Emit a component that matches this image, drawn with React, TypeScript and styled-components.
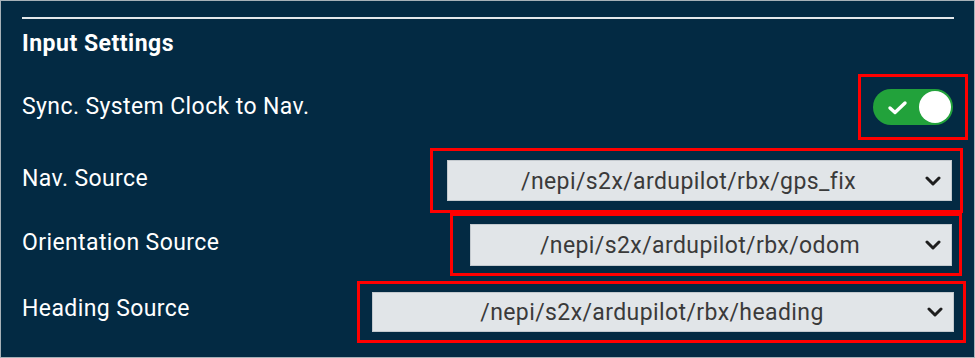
import React from "react";
import styled, { createGlobalStyle } from "styled-components";

const Global = createGlobalStyle`
  html, body { margin: 0; padding: 0; background: #ffffff; }
  body { font-family: Roboto, "Liberation Sans", Arial, sans-serif; }
  * { box-sizing: border-box; }
`;

const Frame = styled.div`
  width: 975px;
  height: 358px;
  background: #032a43;
  border: 1px solid #a7b1b8;
  padding: 16px 0 0 21px;
  display: flex;
  flex-direction: column;
  overflow: hidden;
`;

const Divider = styled.div`
  height: 2px;
  width: 932px;
  background: #e3e8eb;
`;

const Title = styled.div`
  margin-top: 11px;
  color: #ffffff;
  font-size: 23px;
  font-weight: 700;
  line-height: 28px;
  letter-spacing: 0.5px;
`;

const Rows = styled.div`
  margin-top: 16px;
  display: flex;
  flex-direction: column;
`;

const Row = styled.div<{ $h: number; $gap: number }>`
  height: ${(p) => p.$h}px;
  margin-top: ${(p) => p.$gap}px;
  display: flex;
  align-items: center;
  justify-content: space-between;
`;

const Label = styled.div<{ $dy?: number }>`
  color: #ffffff;
  font-size: 23px;
  line-height: 28px;
  letter-spacing: 0.4px;
  transform: translateY(${(p) => p.$dy ?? 0}px);
`;

const Highlight = styled.div<{ $w: number; $mr: number; $pl: number }>`
  width: ${(p) => p.$w}px;
  height: 100%;
  margin-right: ${(p) => p.$mr}px;
  border: 3px solid #ff0000;
  padding-left: ${(p) => p.$pl}px;
  display: flex;
  align-items: center;
`;

const SelectBox = styled.div<{ $w: number; $h: number }>`
  width: ${(p) => p.$w}px;
  height: ${(p) => p.$h}px;
  background: #e1e5e8;
  border: 1px solid #c3c9ce;
  display: flex;
  align-items: center;
`;

const SelectValue = styled.div`
  flex: 1;
  text-align: center;
  color: #3a3a3a;
  font-size: 23px;
  line-height: 28px;
  letter-spacing: 0.4px;
  padding-left: 4px;
  transform: translateY(1px);
`;

const Chevron = styled.svg`
  width: 16px;
  height: 12px;
  margin-right: 10px;
  flex: none;
`;

const Toggle = styled.div`
  width: 80px;
  height: 36px;
  border-radius: 18px;
  background: #22a23b;
  display: flex;
  align-items: center;
  justify-content: space-between;
  padding: 0 2px 0 14px;
`;

const Knob = styled.div`
  width: 32px;
  height: 32px;
  border-radius: 50%;
  background: #ffffff;
`;

const Check = styled.svg`
  width: 21px;
  height: 15px;
`;

const Select: React.FC<{ w: number; h: number; value: string }> = ({ w, h, value }) => (
  <SelectBox $w={w} $h={h}>
    <SelectValue>{value}</SelectValue>
    <Chevron viewBox="0 0 16 12">
      <polyline points="2,3 8,9 14,3" fill="none" stroke="#1e1e1e" strokeWidth="3" strokeLinecap="round" strokeLinejoin="round" />
    </Chevron>
  </SelectBox>
);

export default function App() {
  return (
    <>
      <Global />
      <Frame>
        <Divider />
        <Title>Input Settings</Title>
        <Rows>
          <Row $h={66} $gap={0}>
            <Label>Sync. System Clock to Nav.</Label>
            <Highlight $w={110} $mr={6} $pl={12}>
              <Toggle>
                <Check viewBox="0 0 21 15">
                  <polyline points="3,8 8,12.5 18,3" fill="none" stroke="#ffffff" strokeWidth="3.4" strokeLinecap="round" strokeLinejoin="round" />
                </Check>
                <Knob />
              </Toggle>
            </Highlight>
          </Row>
          <Row $h={65} $gap={8}>
            <Label $dy={-2}>Nav. Source</Label>
            <Highlight $w={533} $mr={11} $pl={14}>
              <Select w={505} h={41} value="/nepi/s2x/ardupilot/rbx/gps_fix" />
            </Highlight>
          </Row>
          <Row $h={63} $gap={0}>
            <Label $dy={-2}>Orientation Source</Label>
            <Highlight $w={512} $mr={12} $pl={17}>
              <Select w={482} h={42} value="/nepi/s2x/ardupilot/rbx/odom" />
            </Highlight>
          </Row>
          <Row $h={62} $gap={5}>
            <Label $dy={-3}>Heading Source</Label>
            <Highlight $w={609} $mr={8} $pl={12}>
              <Select w={582} h={40} value="/nepi/s2x/ardupilot/rbx/heading" />
            </Highlight>
          </Row>
        </Rows>
      </Frame>
    </>
  );
}
